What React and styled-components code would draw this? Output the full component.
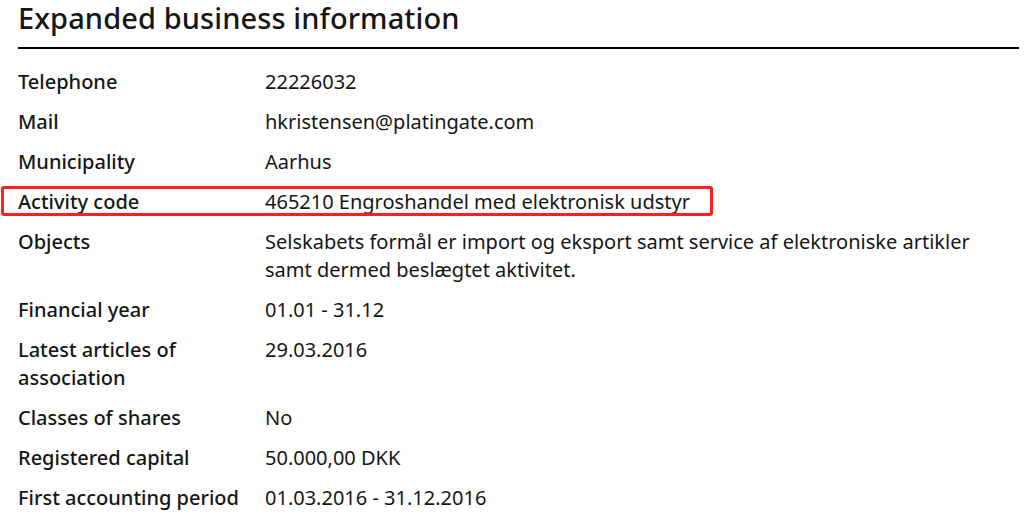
import React from "react";
import styled, { createGlobalStyle } from "styled-components";

const Global = createGlobalStyle`
  html, body { margin: 0; padding: 0; background: #ffffff; }
  body { font-family: "Noto Sans", "Open Sans", Arial, sans-serif; color: #161616; }
`;

const Section = styled.section`
  width: 1001px;
  padding: 0 0 0 18px;
`;

const Title = styled.h2`
  margin: 0;
  font-size: 29px;
  font-weight: 500;
  line-height: 36px;
  letter-spacing: 0.1px;
  padding-bottom: 11px;
  border-bottom: 2px solid #000;
`;

const List = styled.dl`
  margin: 19px 0 0 0;
  display: grid;
  grid-template-columns: 247px 1fr;
  row-gap: 12px;
  font-size: 20px;
  line-height: 28px;
`;

const Row = styled.div`
  display: contents;
`;

const Label = styled.dt`
  margin: 0;
  font-weight: 500;
  position: relative;
`;

const Value = styled.dd`
  margin: 0;
  font-weight: 400;
  max-width: 720px;
`;

const Highlight = styled.span`
  position: absolute;
  left: -17px;
  top: -2px;
  width: 712px;
  height: 30px;
  box-sizing: border-box;
  border: 3px solid #ff1f1f;
  border-radius: 3px;
  pointer-events: none;
`;

const rows = [
  ["Telephone", "22226032"],
  ["Mail", "hkristensen@platingate.com"],
  ["Municipality", "Aarhus"],
  ["Activity code", "465210 Engroshandel med elektronisk udstyr", true],
  [
    "Objects",
    "Selskabets formål er import og eksport samt service af elektroniske artikler samt dermed beslægtet aktivitet.",
  ],
  ["Financial year", "01.01 - 31.12"],
  ["Latest articles of association", "29.03.2016"],
  ["Classes of shares", "No"],
  ["Registered capital", "50.000,00 DKK"],
  ["First accounting period", "01.03.2016 - 31.12.2016"],
];

export default function App() {
  return (
    <>
      <Global />
      <Section>
        <Title>Expanded business information</Title>
        <List>
          {rows.map(([label, value, hl]) => (
            <Row key={label}>
              <Label>
                {hl && <Highlight />}
                {label === "Latest articles of association" ? (
                  <>
                    Latest articles of
                    <br />
                    association
                  </>
                ) : (
                  label
                )}
              </Label>
              <Value>{value}</Value>
            </Row>
          ))}
        </List>
      </Section>
    </>
  );
}
